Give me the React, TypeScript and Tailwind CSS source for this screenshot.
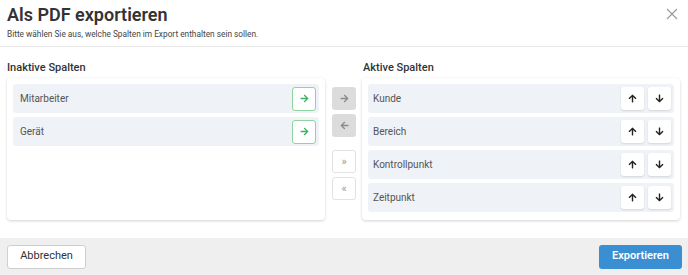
import React from "react";
import { FaArrowRight, FaArrowLeft, FaArrowUp, FaArrowDown } from "react-icons/fa";

const inactive = ["Mitarbeiter", "Gerät"];
const active = ["Kunde", "Bereich", "Kontrollpunkt", "Zeitpunkt"];

const App: React.FC = () => {
  return (
    <div
      className="w-[688px] h-[275px] bg-white flex flex-col text-[#333]"
      style={{ fontFamily: "Roboto, 'Liberation Sans', sans-serif" }}
    >
      {/* Header */}
      <div className="h-[47px] border-b border-[#e8e8e8] px-[7px] pt-[3px] flex justify-between">
        <div>
          <h1 className="text-[18px] leading-[24px] font-semibold text-[#333]">Als PDF exportieren</h1>
          <p className="text-[8.3px] leading-[12px] text-[#444] mt-[1px]">
            Bitte wählen Sie aus, welche Spalten im Export enthalten sein sollen.
          </p>
        </div>
        <button className="w-[12px] h-[12px] mt-[5px] mr-[3px] text-[#999]">
          <svg viewBox="0 0 12 12" className="w-[12px] h-[12px]" stroke="currentColor" strokeWidth="1.1">
            <path d="M1 1 L11 11 M11 1 L1 11" />
          </svg>
        </button>
      </div>

      {/* Body */}
      <div className="flex-1 flex gap-[6px] pl-[7px] pr-[8px] pt-[14px]">
        {/* Inactive */}
        <div className="w-[318px] flex flex-col">
          <div className="text-[11px] leading-[14px] font-medium text-[#333] h-[17px]">Inaktive Spalten</div>
          <div className="h-[142px] bg-white rounded-[4px] shadow-[0_1px_3px_rgba(0,0,0,0.18)] p-[6px] flex flex-col gap-[4px]">
            {inactive.map((name) => (
              <div key={name} className="h-[29px] bg-[#eff2f7] rounded-[3px] flex items-center justify-between pl-[7px] pr-[3px]">
                <span className="text-[10px] text-[#555]">{name}</span>
                <button className="w-[24px] h-[24px] bg-white border border-[#8fd3a0] rounded-[3px] flex items-center justify-center">
                  <FaArrowRight className="w-[9px] h-[9px] text-[#3cb562]" />
                </button>
              </div>
            ))}
          </div>
        </div>

        {/* Middle controls */}
        <div className="w-[24px] flex flex-col pt-[26px] ml-[1px]">
          <button className="w-[24px] h-[23px] bg-[#dcdcdc] rounded-[3px] flex items-center justify-center">
            <FaArrowRight className="w-[9px] h-[9px] text-[#8a8a8a]" />
          </button>
          <button className="w-[24px] h-[23px] mt-[4px] bg-[#dcdcdc] rounded-[3px] flex items-center justify-center">
            <FaArrowLeft className="w-[9px] h-[9px] text-[#8a8a8a]" />
          </button>
          <button className="w-[24px] h-[23px] mt-[13px] bg-white border border-[#e2e2e2] rounded-[3px] flex items-center justify-center text-[11px] text-[#999] leading-none">
            »
          </button>
          <button className="w-[24px] h-[23px] mt-[4px] bg-white border border-[#e2e2e2] rounded-[3px] flex items-center justify-center text-[11px] text-[#999] leading-none">
            «
          </button>
        </div>

        {/* Active */}
        <div className="w-[318px] flex flex-col">
          <div className="text-[11px] leading-[14px] font-medium text-[#333] h-[17px] pl-[1px]">Aktive Spalten</div>
          <div className="h-[142px] bg-white rounded-[4px] shadow-[0_1px_3px_rgba(0,0,0,0.18)] p-[6px] flex flex-col gap-[4px]">
            {active.map((name) => (
              <div key={name} className="h-[29px] bg-[#eff2f7] rounded-[3px] flex items-center justify-between pl-[5px] pr-[3px]">
                <span className="text-[10px] text-[#555]">{name}</span>
                <div className="flex gap-[4px]">
                  <button className="w-[23px] h-[23px] bg-white rounded-[3px] shadow-[0_1px_2px_rgba(0,0,0,0.12)] flex items-center justify-center">
                    <FaArrowUp className="w-[9px] h-[9px] text-[#222]" />
                  </button>
                  <button className="w-[23px] h-[23px] bg-white rounded-[3px] shadow-[0_1px_2px_rgba(0,0,0,0.12)] flex items-center justify-center">
                    <FaArrowDown className="w-[9px] h-[9px] text-[#222]" />
                  </button>
                </div>
              </div>
            ))}
          </div>
        </div>
      </div>

      {/* Footer */}
      <div className="h-[37px] bg-[#efefef] flex items-center justify-between pl-[7px] pr-[6px]">
        <button className="w-[79px] h-[24px] bg-white border border-[#cfcfcf] rounded-[3px] text-[11px] text-[#333]">
          Abbrechen
        </button>
        <button className="w-[83px] h-[24px] bg-[#3a8fd3] rounded-[3px] text-[11px] font-semibold text-white">
          Exportieren
        </button>
      </div>
    </div>
  );
};

export default App;
